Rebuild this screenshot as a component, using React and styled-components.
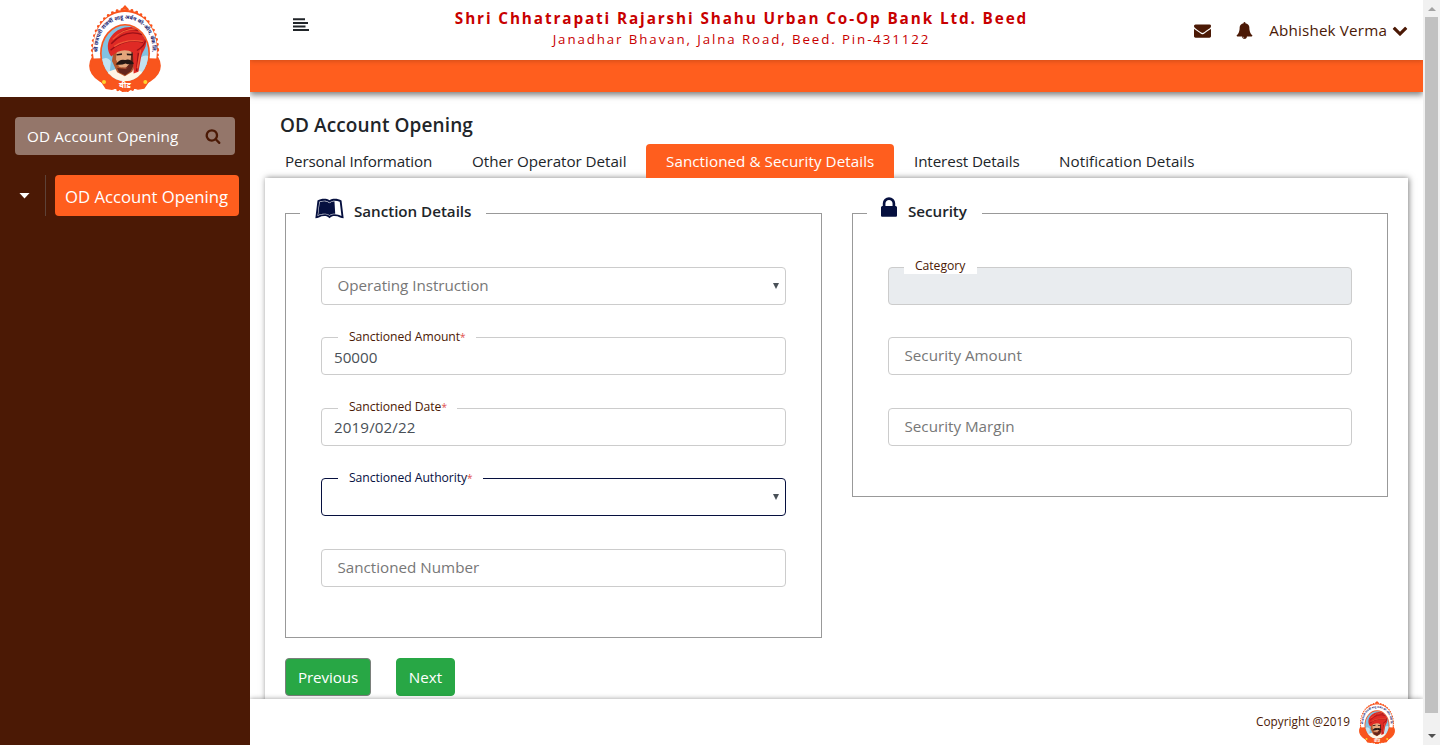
import React from 'react';
import styled, { createGlobalStyle } from 'styled-components';
import { FaLeanpub } from 'react-icons/fa';

const GlobalStyle = createGlobalStyle`
  *, *::before, *::after { box-sizing: border-box; }
  body {
    margin: 0;
    overflow: hidden;
    background: #fff;
    color: #212529;
    font: 400 15.2px/24px "Open Sans", "Noto Sans", sans-serif;
  }
`;

const Page = styled.div`display: flex; width: 100%; height: 745px; overflow: hidden;`;

const Sidebar = styled.aside`
  width: 250px; flex: none; background: #4b1905; color: #fff; position: relative; z-index: 4;
`;
const Brand = styled.div`
  height: 97px; background: #fff; padding: 5px 0 0; display: flex; justify-content: center; align-items: flex-start;
`;
const SearchBox = styled.div`
  margin: 20px 15px 0; height: 38px; padding: 0 14px 0 12px; border-radius: 4px;
  background: #94766a; display: flex; align-items: center; justify-content: space-between;
  svg { color: #4b1905; }
`;
const MenuRow = styled.div`margin: 20px 11px 0 19px; height: 41px; display: flex; align-items: center;`;
const Caret = styled.span`
  width: 11px; height: 6px; background: #fff; clip-path: polygon(0 0, 100% 0, 50% 100%);
`;
const MenuDivider = styled.span`width: 1px; height: 41px; margin: 0 9px 0 15px; background: #5d4238;`;
const MenuItem = styled.a`
  flex: none; width: 184px; height: 41px; line-height: 43px; border-radius: 4px; background: #ff5e1e;
  padding-left: 10px; white-space: nowrap; font-size: 16.7px;
`;

const Main = styled.div`flex: 1; min-width: 0; display: flex; flex-direction: column;`;
const Header = styled.header`
  flex: none; height: 60px; display: flex; position: relative; z-index: 2;
  background: #fff; box-shadow: 0 1px 5px rgba(0, 0, 0, 0.2); padding: 0 16px 0 43px;
`;
const HeaderSide = styled.div`
  width: ${(p) => p.$w}px; flex: none; display: flex; padding-top: ${(p) => p.$top}px;
  color: ${(p) => (p.$end ? '#4b1905' : '#212529')};
  justify-content: ${(p) => (p.$end ? 'flex-end' : 'flex-start')};
`;
const HeaderTitle = styled.div`
  flex: 1; text-align: center; color: #c80000; white-space: nowrap; padding-top: 8px;
`;
const BankName = styled.div`font-size: 15.3px; font-weight: 700; line-height: 21px;`;
const BankAddress = styled.div`font-size: 13.3px; line-height: 21px;`;
const Ribbon = styled.div`
  flex: none; height: 32px; background: #ff5e1e; box-shadow: 0 3px 6px rgba(0, 0, 0, 0.5);
`;

const Content = styled.main`
  flex: 1; min-height: 0; overflow: hidden; padding: 18px 15px 0; display: flex; flex-direction: column;
`;
const PageTitle = styled.h1`
  margin: 0 0 4px 15px; font-size: 19px; line-height: 30px; font-weight: 600;
`;
const Tabs = styled.nav`display: flex; height: 34px; flex: none; position: relative; z-index: 1;`;
const Tab = styled.a`
  flex: none; padding: 0 20px; line-height: 34px; white-space: nowrap;
  width: ${(p) => p.$w}px; border-radius: 4px 4px 0 0;
  color: ${(p) => (p.$active ? '#fff' : '#212529')};
  background: ${(p) => (p.$active ? '#ff5e1e' : 'transparent')};
`;
const Panel = styled.section`
  flex: none; height: 560px; background: #fff; padding: 35px 20px 0;
  box-shadow: 1px 0 6px rgba(0, 0, 0, 0.5);
`;
const Columns = styled.div`display: flex; gap: 30px; align-items: flex-start;`;
const Group = styled.section`
  width: ${(p) => p.$w}px; height: ${(p) => p.$h}px; border: 1px solid #999; padding: 0 35px;
`;
const GroupTitle = styled.h2`
  width: ${(p) => p.$w}px; height: 30px; margin: -18px 0 0 -21px; padding: 0 14px 0 ${(p) => p.$pad}px;
  display: flex; align-items: center; gap: ${(p) => p.$gap}px; background: #fff;
  font-size: 15.2px; font-weight: 600; white-space: nowrap;
  svg { flex: none; margin-top: ${(p) => p.$lift}px; color: #06103f; }
`;
const Fields = styled.div`padding-top: 40.75px; display: grid; row-gap: 32.5px;`;
const Field = styled.div`
  position: relative; height: 38px; border-radius: 4px; padding: 0 6px 0 ${(p) => (p.$filled ? 12 : 15.5)}px;
  display: flex; align-items: center; justify-content: space-between;
  border: 1px solid ${(p) => (p.$focus ? '#06103f' : '#ccc')};
  background: ${(p) => (p.$disabled ? '#e9ecef' : '#fff')};
  color: ${(p) => (p.$filled ? '#495057' : '#777')};
  padding-top: ${(p) => (p.$filled ? 1 : 0)}px;
  padding-bottom: ${(p) => (p.$filled ? 0 : 2)}px;
`;
const FloatLabel = styled.label`
  position: absolute; left: ${(p) => p.$x || 16}px; top: -10.75px; height: 17px; line-height: 17px; padding: 0 11px;
  background: #fff; color: ${(p) => (p.$focus ? '#06103f' : '#4b1905')}; font-size: 12.2px; white-space: nowrap;
  width: ${(p) => p.$w}px;
`;
const Required = styled.span`color: #e0504c; font-size: 10px;`;
const Arrow = styled.span`
  margin: 2px 0 0 auto; border: 3px solid transparent; border-top: 6px solid #495057; border-bottom: 0;
`;
const Actions = styled.div`display: flex; gap: 25px; padding-top: 20px;`;
const Button = styled.button`
  width: ${(p) => p.$w}px; height: 38px; padding: 0; border-radius: 4px; background: #28a745; color: #fff; font: inherit;
  border: 1px solid ${(p) => (p.$outlined ? '#7a7f7b' : '#28a745')};
`;
const Footer = styled.footer`
  flex: none; height: 46px; background: #fff; position: relative; z-index: 2; color: #4b1905;
  box-shadow: 0 0 5px rgba(0, 0, 0, 0.4); font-size: 11.8px;
  display: flex; justify-content: flex-end; align-items: center; gap: 9px; padding-right: 28px;
  > span { margin-top: -2px; }
`;

const Scrollbar = styled.div`
  width: 17px; flex: none; background: #f1f1f1; display: flex; flex-direction: column; align-items: center;
  position: relative; z-index: 3;
`;
const ScrollEnd = styled.span`
  width: 17px; height: ${(p) => (p.$down ? 32 : 17)}px; display: flex; align-items: center; justify-content: center;
  padding-top: ${(p) => (p.$down ? 14 : 0)}px;
  &::after {
    content: ""; border: 4px solid transparent;
    ${(p) => (p.$down ? 'border-top-color: #505050; border-bottom: 0;' : 'border-bottom-color: #a3a3a3; border-top: 0;')}
  }
`;
const Thumb = styled.span`width: 13px; flex: 1; background: #c1c1c1;`;

const Text = styled.span`letter-spacing: ${(p) => p.$ls || 0}px; white-space: nowrap;`;
const Icon = styled.svg`
  flex: none; display: block; fill: currentColor; margin: ${(p) => p.$m || 0};
`;

const paths = {
  search: 'M1216 832q0-185-131.5-316.5t-316.5-131.5-316.5 131.5-131.5 316.5 131.5 316.5 316.5 131.5 316.5-131.5 131.5-316.5zm512 832q0 52-38 90t-90 38q-54 0-90-38l-343-342q-179 124-399 124-143 0-273.5-55.5t-225-150-150-225-55.5-273.5 55.5-273.5 150-225 225-150 273.5-55.5 273.5 55.5 225 150 150 225 55.5 273.5q0 220-124 399l343 343q37 37 37 90z',
  mail: 'M1792 710v794q0 66-47 113t-113 47h-1472q-66 0-113-47t-47-113v-794q44 49 101 87 362 246 497 345 57 42 92.5 65.5t94.5 48 110 24.5h2q51 0 110-24.5t94.5-48 92.5-65.5q170-123 498-345 57-39 100-87zm0-294q0 79-49 151t-122 123q-376 261-468 325-10 7-42.5 31t-54 38.5-52 32.5-57.5 27-50 9h-2q-23 0-50-9t-57.5-27-52-32.5-54-38.5-42.5-31q-91-64-262-182.5t-205-142.5q-62-42-117-115.5t-55-136.5q0-78 41.5-130t118.5-52h1472q65 0 112.5 47t47.5 113z',
  bell: 'M912 1696q0-16-16-16-59 0-101.5-42.5t-42.5-101.5q0-16-16-16t-16 16q0 73 51.5 124.5t124.5 51.5q16 0 16-16zm816-288q0 52-38 90t-90 38h-448q0 106-75 181t-181 75-181-75-75-181h-448q-52 0-90-38t-38-90q50-42 91-88t85-119.5 74.5-158.5 50-206 19.5-260q0-152 117-282.5t307-158.5q-8-19-8-39 0-40 28-68t68-28 68 28 28 68q0 20-8 39 190 28 307 158.5t117 282.5q0 139 19.5 260t50 206 74.5 158.5 85 119.5 91 88z',
  down: 'M1683 808l-742 741q-19 19-45 19t-45-19l-742-741q-19-19-19-45.5t19-45.5l166-165q19-19 45-19t45 19l531 531 531-531q19-19 45-19t45 19l166 165q19 19 19 45.5t-19 45.5z',
  lock: 'M640 768h512v-192q0-106-75-181t-181-75-181 75-75 181v192zm832 96v576q0 40-28 68t-68 28h-960q-40 0-68-28t-28-68v-576q0-40 28-68t68-28h32v-192q0-184 132-316t316-132 316 132 132 316v192h32q40 0 68 28t28 68z',
};

const Glyph = ({ name, size, m, box = '0 0 1792 1792', w }) => (
  <Icon width={w || size} height={size} viewBox={box} $m={m}><path d={paths[name]} /></Icon>
);

const Emblem = ({ width, height, id }) => (
  <svg width={width} height={height} viewBox="57 14 216 262" preserveAspectRatio="none">
    <defs>
      <path id={`${id}-arc`} d="M85 174 C73 98 117 56 165 56 S257 98 245 174" />
      <clipPath id={`${id}-clip`}><ellipse cx="165" cy="160" rx="70" ry="84" /></clipPath>
    </defs>
    <g fill="#f9551d" stroke="#f9551d" strokeLinecap="round">
      <path stroke="none" d="M165 14l13 14h-26z" />
      <ellipse cx="165" cy="150" rx="98" ry="122" strokeWidth="9" strokeDasharray="0 15" />
      <ellipse cx="165" cy="197" rx="104" ry="64" strokeWidth="7" />
      <path stroke="none" d="M93 246h144l-14 20-19 3-15-4-10 7-14 4-14-4-11-7-14 5-19-3z" />
    </g>
    <path fill="#fff" d="M71 175C58 94 105 35 165 35s107 59 94 140l-22-1q-4-96-72-96t-72 96z" />
    <ellipse cx="165" cy="160" rx="75" ry="89" fill="#f9551d" />
    <g clipPath={`url(#${id}-clip)`}>
      <path fill="#82c2e2" d="M90 70h150v190H90z" />
      <g transform="translate(-17 -5) scale(1.1 1.02)">
        <path fill="#c3e2f0" d="M97 182q20-16 30 4l-5 45H90zM207 174q20-14 30 4l-4 44-30-8z" />
        <path fill="#fff5e5" d="M109 237l12-22 22-8 46 2 24 7 8 24-30 12-66 3z" />
        <path fill="#b4572c" d="M135 144l55-10 8 48-13 34-20 13-21-12-14-33z" />
        <path fill="#e3a67c" d="M143 150l24-5 19 11-1 38-17 12-19-5-8-22z" />
        <path fill="#64251b" d="M184 149l12 4-3 34-12 27-15 12-17-9-5-12 21 2 15-17z" />
        <path fill="#df2a25" d="M128 171c-13-18-13-46 3-64 12-15 31-25 55-23 25 3 37 20 37 45 0 18-9 24-13 40l-8 47-13 5-2-62q-30-18-59 12z" />
        <path fill="none" stroke="#9b1018" strokeWidth="4" d="M128 133q38-45 85-27M126 152q39-37 89-23M148 106q25-22 54-12M198 153q23-14 24-34M202 160l-5 54" />
        <path fill="none" stroke="#f35a38" strokeWidth="4" d="M132 120q28-31 63-31M136 141q32-23 78-15M208 152l-9 54" />
        <path fill="#241614" d="M142 164l15-3v5l-14 2zm28-2l16 1-1 5-14-1zM140 194q11-18 26-13 14-5 24 10-12 5-23 0-12 6-27 3z" />
        <path fill="#a3452e" d="M156 203h18l-8 5z" />
      </g>
    </g>
    <text fill="#20246f" fontSize="16" fontWeight="700" fontFamily="Noto Sans Devanagari, Noto Sans, sans-serif">
      <textPath href={`#${id}-arc`} startOffset="50%" textAnchor="middle">श्री छत्रपती राजर्षी शाहू अर्बन को-ऑप. बँक लि.</textPath>
    </text>
    <path fill="#f9551d" d="M118 239q48 10 94 0l-8 28h-78z" />
    <circle cx="102" cy="246" r="6" fill="#ffd32f" />
    <circle cx="226" cy="246" r="6" fill="#ffd32f" />
    <text x="165" y="263" textAnchor="middle" fill="#fff" fontSize="24" fontWeight="700" fontFamily="Noto Sans Devanagari, Noto Sans, sans-serif">बीड</text>
  </svg>
);

const Input = ({ label, labelWidth, labelX, required, focus, disabled, select, placeholder, value, ls }) => (
  <Field $filled={!!value} $focus={focus} $disabled={disabled}>
    {label && (
      <FloatLabel $w={labelWidth} $x={labelX} $focus={focus}>
        <Text $ls={-0.06}>{label}</Text>{required && <Required>*</Required>}
      </FloatLabel>
    )}
    <Text $ls={ls}>{value || placeholder}</Text>
    {select && <Arrow />}
  </Field>
);

export default function App() {
  return (
    <Page>
      <GlobalStyle />
      <Sidebar>
        <Brand><Emblem id="brand" width={72} height={87} /></Brand>
        <SearchBox>
          <Text $ls={0.17}>OD Account Opening</Text>
          <Glyph name="search" size={16} m="0 0 1px" />
        </SearchBox>
        <MenuRow>
          <Caret />
          <MenuDivider />
          <MenuItem><Text>OD Account Opening</Text></MenuItem>
        </MenuRow>
      </Sidebar>
      <Main>
        <Header>
          <HeaderSide $w={16} $top={18}>
            <Icon width="16" height="13" viewBox="0 0 16 13">
              <path d="M0 .3h12v2H0zM0 4h15v2H0zM0 7.5h12.5v2H0zM0 11h16v2H0z" />
            </Icon>
          </HeaderSide>
          <HeaderTitle>
            <BankName><Text $ls={1.88}>Shri Chhatrapati Rajarshi Shahu Urban Co-Op Bank Ltd. Beed</Text></BankName>
            <BankAddress><Text $ls={1.9}>Janadhar Bhavan, Jalna Road, Beed. Pin-431122</Text></BankAddress>
          </HeaderTitle>
          <HeaderSide $w={233} $top={18} $end>
            <Glyph name="mail" size={17} m="4px 25px 0 0" />
            <Glyph name="bell" size={17} m="4px 16px 0 0" />
            <Text $ls={0.17}>Abhishek Verma</Text>
            <Glyph name="down" size={16} m="4px -1px 0 5px" />
          </HeaderSide>
        </Header>
        <Ribbon />
        <Content>
          <PageTitle><Text $ls={0.1}>OD Account Opening</Text></PageTitle>
          <Tabs>
            <Tab $w={187}><Text $ls={-0.14}>Personal Information</Text></Tab>
            <Tab $w={194}><Text $ls={-0.04}>Other Operator Detail</Text></Tab>
            <Tab $w={248} $active><Text $ls={0.06}>Sanctioned &amp; Security Details</Text></Tab>
            <Tab $w={145}><Text $ls={-0.1}>Interest Details</Text></Tab>
            <Tab $w={175}><Text $ls={0.05}>Notification Details</Text></Tab>
          </Tabs>
          <Panel>
            <Columns>
              <Group $w={537} $h={425}>
                <GroupTitle $w={186} $gap={10} $pad={15} $lift={-5}>
                  <FaLeanpub size={29} />
                  <Text $ls={-0.04}>Sanction Details</Text>
                </GroupTitle>
                <Fields>
                  <Input placeholder="Operating Instruction" select ls={-0.03} />
                  <Input label="Sanctioned Amount" labelWidth={138} required value="50000" />
                  <Input label="Sanctioned Date" labelWidth={119} required value="2019/02/22" ls={0.1} />
                  <Input label="Sanctioned Authority" labelWidth={145} required focus select />
                  <Input placeholder="Sanctioned Number" />
                </Fields>
              </Group>
              <Group $w={536} $h={284}>
                <GroupTitle $w={115} $gap={11} $pad={14} $lift={-8}>
                  <Glyph name="lock" w={16} size={20} box="320 128 1152 1408" />
                  <Text $ls={-0.04}>Security</Text>
                </GroupTitle>
                <Fields>
                  <Input label="Category" labelWidth={73} labelX={15} disabled />
                  <Input placeholder="Security Amount" />
                  <Input placeholder="Security Margin" />
                </Fields>
              </Group>
            </Columns>
            <Actions>
              <Button $w={86} $outlined><Text $ls={-0.1}>Previous</Text></Button>
              <Button $w={59}><Text>Next</Text></Button>
            </Actions>
          </Panel>
        </Content>
        <Footer>
          <Text>Copyright @2019</Text>
          <Emblem id="footer" width={36} height={43} />
        </Footer>
      </Main>
      <Scrollbar>
        <ScrollEnd />
        <Thumb />
        <ScrollEnd $down />
      </Scrollbar>
    </Page>
  );
}
